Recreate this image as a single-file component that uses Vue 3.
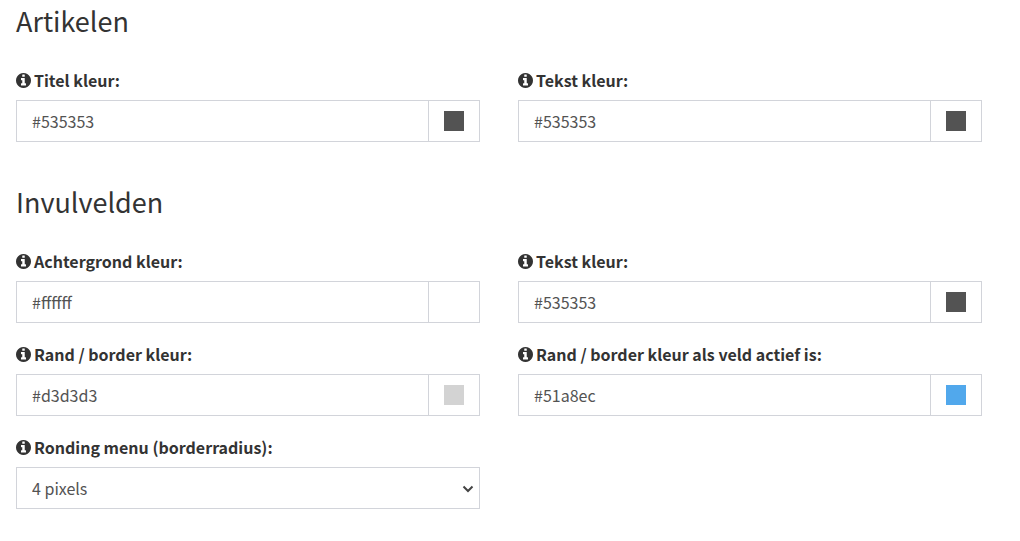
<script setup>
import { reactive } from 'vue'

const sections = reactive([
  {
    title: 'Artikelen',
    fields: [
      { id: 'article-title', label: 'Titel kleur:', value: '#535353' },
      { id: 'article-text', label: 'Tekst kleur:', value: '#535353' },
    ],
  },
  {
    title: 'Invulvelden',
    fields: [
      { id: 'input-background', label: 'Achtergrond kleur:', value: '#ffffff' },
      { id: 'input-text', label: 'Tekst kleur:', value: '#535353' },
      { id: 'input-border', label: 'Rand / border kleur:', value: '#d3d3d3' },
      { id: 'input-border-active', label: 'Rand / border kleur als veld actief is:', value: '#51a8ec' },
      {
        id: 'input-radius',
        label: 'Ronding menu (borderradius):',
        value: '4 pixels',
        options: ['0 pixels', '2 pixels', '4 pixels', '6 pixels', '8 pixels'],
      },
    ],
  },
])
</script>

<template>
  <main class="page">
    <section v-for="section in sections" :key="section.title" class="section">
      <h2 class="title">{{ section.title }}</h2>
      <div class="grid">
        <div v-for="field in section.fields" :key="field.id" class="field">
          <label class="label" :for="field.id">
            <svg class="info" viewBox="0 0 1536 1536" aria-hidden="true">
              <path
                fill-rule="evenodd"
                d="M1024 1248v-160q0-14-9-23t-23-9h-96V544q0-14-9-23t-23-9H544q-14 0-23 9t-9 23v160q0 14 9 23t23 9h96v320h-96q-14 0-23 9t-9 23v160q0 14 9 23t23 9h448q14 0 23-9t9-23zM896 352V192q0-14-9-23t-23-9H672q-14 0-23 9t-9 23v160q0 14 9 23t23 9h192q14 0 23-9t9-23zM1536 768q0 209-103 385.500T1153.500 1433 768 1536t-385.500-103T103 1153.500 0 768t103-385.500T382.500 103 768 0t385.500 103T1433 382.500 1536 768z"
              />
            </svg>
            <span>{{ field.label }}</span>
          </label>
          <div v-if="field.options" class="control">
            <select :id="field.id" v-model="field.value" class="input">
              <option v-for="option in field.options" :key="option">{{ option }}</option>
            </select>
            <svg class="chevron" viewBox="0 0 12 8" aria-hidden="true">
              <path d="M1.500 1.500 6 6l4.500-4.500" />
            </svg>
          </div>
          <div v-else class="control">
            <input :id="field.id" v-model="field.value" class="input" type="text" spellcheck="false" />
            <button class="picker" type="button" :aria-label="field.label + ' kiezen'">
              <span class="swatch" :style="{ backgroundColor: field.value }"></span>
            </button>
          </div>
        </div>
      </div>
    </section>
  </main>
</template>

<style>
body {
  background: #fff;
}
</style>

<style scoped>
.page {
  padding: 3px 38px 32px 16px;
  color: #333;
  font-family: "Noto Sans CJK SC", "Open Sans", sans-serif;
}

.section + .section {
  margin-top: 42px;
}

.title {
  margin: 0 0 29px;
  font-size: 27px;
  font-weight: 400;
  line-height: 36px;
}

.grid {
  display: grid;
  grid-template-columns: repeat(2, minmax(0, 1fr));
  gap: 19px 38px;
}

.label {
  display: flex;
  align-items: center;
  gap: 3px;
  margin-bottom: 8px;
  font-size: 16px;
  font-weight: 700;
  line-height: 24px;
}

.info {
  width: 15px;
  height: 15px;
  fill: #333;
}

.control {
  position: relative;
  display: flex;
  box-sizing: border-box;
  height: 42px;
  border: 1px solid #d2d4da;
}

.input {
  flex: 1;
  min-width: 0;
  margin: 0;
  padding: 0 15px;
  border: 0;
  border-radius: 0;
  outline: 0;
  appearance: none;
  background: transparent;
  color: #535353;
  font-family: inherit;
  font-size: 16px;
  line-height: 24px;
}

.picker {
  display: flex;
  flex: 0 0 51px;
  align-items: center;
  justify-content: center;
  padding: 0;
  border: 0;
  border-left: 1px solid #d2d4da;
  background: #fff;
}

.swatch {
  width: 20px;
  height: 20px;
}

.chevron {
  position: absolute;
  top: 17px;
  right: 5px;
  width: 12px;
  height: 8px;
  fill: none;
  stroke: #444;
  stroke-width: 2;
  pointer-events: none;
}
</style>
